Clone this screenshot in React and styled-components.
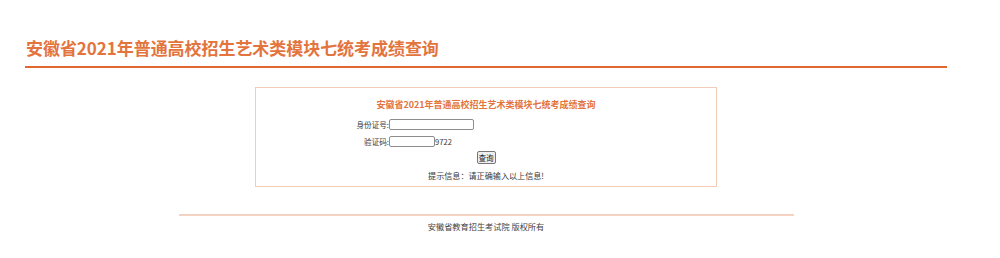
import React from "react";
import styled, { createGlobalStyle } from "styled-components";

const Global = createGlobalStyle`
  html, body { margin: 0; padding: 0; background: #ffffff; }
  body { font-family: "Noto Sans CJK SC", "Noto Sans", sans-serif; color: #333; }
`;

const Page = styled.div`
  width: 972px;
  display: flex;
  flex-direction: column;
  align-items: center;
`;

const Header = styled.div`
  width: 922px;
  box-sizing: border-box;
  padding: 38px 0 8px 1px;
  border-bottom: 2px solid #e0672f;
`;

const HeaderTitle = styled.h1`
  margin: 0;
  font-size: 17px;
  line-height: 20px;
  font-weight: 700;
  color: #e3743d;
  letter-spacing: -0.05px;
`;

const Box = styled.div`
  margin-top: 19px;
  width: 462px;
  height: 100px;
  box-sizing: border-box;
  border: 1px solid #f3ccb7;
  padding-top: 8px;
  display: flex;
  flex-direction: column;
`;

const BoxTitle = styled.div`
  height: 18px;
  line-height: 18px;
  text-align: center;
  font-size: 9px;
  font-weight: 700;
  color: #e3743d;
`;

const FormGrid = styled.div`
  margin-top: 2px;
  display: grid;
  grid-template-columns: 133px auto;
  grid-auto-rows: 17px;
  align-items: center;
`;

const Label = styled.span`
  text-align: right;
  font-size: 7.6px;
  color: #3a3a3a;
`;

const Field = styled.span`
  display: flex;
  align-items: center;
  font-size: 7.6px;
  color: #3a3a3a;
`;

const Input = styled.input`
  box-sizing: border-box;
  width: ${(p) => p.$w}px;
  height: 11px;
  margin: 0;
  padding: 0 2px;
  border: 1px solid #8d8d8d;
  border-radius: 2px;
  background: #fff;
  font-size: 7px;
`;

const ButtonRow = styled.div`
  height: 14px;
  display: flex;
  justify-content: center;
  align-items: center;
`;

const Button = styled.button`
  box-sizing: border-box;
  height: 13px;
  width: 19px;
  padding: 0;
  border: 1px solid #767676;
  border-radius: 2px;
  background: #efefef;
  font-family: inherit;
  font-size: 7.6px;
  line-height: 11px;
  color: #222;
`;

const Hint = styled.div`
  margin-top: 4px;
  height: 15px;
  line-height: 15px;
  text-align: center;
  font-size: 8.1px;
  color: #3a3a3a;
`;

const FooterLine = styled.div`
  margin-top: 27px;
  width: 615px;
  height: 2px;
  background: #f4d3c3;
`;

const FooterText = styled.div`
  margin-top: 4px;
  line-height: 12px;
  font-size: 8.2px;
  color: #444;
  text-align: center;
`;

export default function App() {
  return (
    <>
      <Global />
      <Page>
        <Header>
          <HeaderTitle>安徽省2021年普通高校招生艺术类模块七统考成绩查询</HeaderTitle>
        </Header>
        <Box>
          <BoxTitle>安徽省2021年普通高校招生艺术类模块七统考成绩查询</BoxTitle>
          <FormGrid>
            <Label>身份证号:</Label>
            <Field>
              <Input $w={85} type="text" />
            </Field>
            <Label>验证码:</Label>
            <Field>
              <Input $w={46} type="text" />
              9722
            </Field>
          </FormGrid>
          <ButtonRow>
            <Button type="button">查询</Button>
          </ButtonRow>
          <Hint>提示信息：请正确输入以上信息!</Hint>
        </Box>
        <FooterLine />
        <FooterText>安徽省教育招生考试院 版权所有</FooterText>
      </Page>
    </>
  );
}
